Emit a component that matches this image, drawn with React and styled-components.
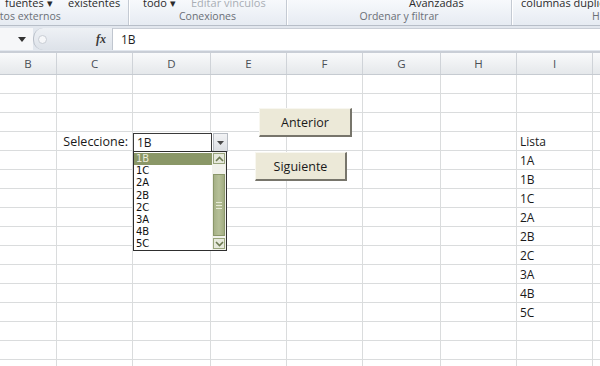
import React from 'react';
import styled, { createGlobalStyle } from 'styled-components';

const GlobalStyle = createGlobalStyle`
  html, body {
    margin: 0;
    padding: 0;
    background: #ffffff;
  }
  body {
    width: 600px;
    height: 366px;
    overflow: hidden;
    font-family: 'Open Sans', 'Liberation Sans', sans-serif;
  }
`;

const COLS = [57, 76, 78, 76, 76, 78, 76, 76, 30];
const LETTERS = ['B', 'C', 'D', 'E', 'F', 'G', 'H', 'I', ''];
const ROW_COUNT = 16;

// contenido de las celdas: fila -> { columna: texto }
const CELLS = {
  3: { 1: 'Seleccione:', 7: 'Lista' },
  4: { 7: '1A' },
  5: { 7: '1B' },
  6: { 7: '1C' },
  7: { 7: '2A' },
  8: { 7: '2B' },
  9: { 7: '2C' },
  10: { 7: '3A' },
  11: { 7: '4B' },
  12: { 7: '5C' },
};

const OPTIONS = ['1B', '1C', '2A', '2B', '2C', '3A', '4B', '5C'];

const App = () => {
  return (
    <Page>
      <GlobalStyle />
      <Ribbon>
        <Group $w={128}>
          <GroupTop>
            <TopText $left={5}>fuentes ▾</TopText>
            <TopText $left={68}>existentes</TopText>
          </GroupTop>
          <GroupLabel $align="left" $shift={-6}>atos externos</GroupLabel>
        </Group>
        <Group $w={157}>
          <GroupTop>
            <TopText $left={14}>todo ▾</TopText>
            <TopText $left={62} $faded>Editar vínculos</TopText>
          </GroupTop>
          <GroupLabel>Conexiones</GroupLabel>
        </Group>
        <Group $w={224}>
          <GroupTop>
            <TopText $left={122}>Avanzadas</TopText>
          </GroupTop>
          <GroupLabel>Ordenar y filtrar</GroupLabel>
        </Group>
        <Group $w={91} $last>
          <GroupTop>
            <TopText $left={9}>columnas  duplicados</TopText>
          </GroupTop>
          <GroupLabel $align="left" $shift={80}>H</GroupLabel>
        </Group>
      </Ribbon>

      <FormulaBar>
        <NameBox>
          <svg width="8" height="5" viewBox="0 0 8 5">
            <path d="M0 0 L8 0 L4 5 Z" fill="#333" />
          </svg>
        </NameBox>
        <FxArea>
          <Grip />
          <Fx>fx</Fx>
        </FxArea>
        <FormulaInput>1B</FormulaInput>
      </FormulaBar>

      <Sheet>
        <HeaderRow>
          {COLS.map((w, i) => (
            <HeaderCell key={i} $w={w}>
              {LETTERS[i]}
            </HeaderCell>
          ))}
        </HeaderRow>
        {Array.from({ length: ROW_COUNT }).map((_, r) => (
          <Row key={r}>
            {COLS.map((w, c) => {
              const text = CELLS[r] && CELLS[r][c];
              return (
                <Cell key={c} $w={w} $right={c === 1}>
                  {text}
                </Cell>
              );
            })}
          </Row>
        ))}

        <Combo>
          <ComboInput>1B</ComboInput>
          <ComboButton>
            <svg width="7" height="4" viewBox="0 0 7 4">
              <path d="M0 0 L7 0 L3.5 4 Z" fill="#4a4a4a" />
            </svg>
          </ComboButton>
        </Combo>
        <DropList>
          <Options>
            {OPTIONS.map((o, i) => (
              <OptionRow key={o} $active={i === 0}>
                {o}
              </OptionRow>
            ))}
          </Options>
          <ScrollBar>
            <ScrollArrow>
              <svg width="9" height="6" viewBox="0 0 9 6">
                <path d="M1 5 L4.5 1.5 L8 5" stroke="#6d7a52" strokeWidth="1.6" fill="none" />
              </svg>
            </ScrollArrow>
            <Track>
              <Thumb>
                <GripLine />
                <GripLine />
                <GripLine />
              </Thumb>
            </Track>
            <ScrollArrow>
              <svg width="9" height="6" viewBox="0 0 9 6">
                <path d="M1 1 L4.5 4.5 L8 1" stroke="#6d7a52" strokeWidth="1.6" fill="none" />
              </svg>
            </ScrollArrow>
          </ScrollBar>
        </DropList>

        <FormButton $x={259} $y={55} $w={93}>
          Anterior
        </FormButton>
        <FormButton $x={255} $y={99} $w={92}>
          Siguiente
        </FormButton>
      </Sheet>
    </Page>
  );
};

const Page = styled.div`
  width: 600px;
  height: 366px;
  overflow: hidden;
  display: flex;
  flex-direction: column;
`;

const Ribbon = styled.div`
  height: 25px;
  display: flex;
  background: linear-gradient(#f7f9fc, #e6ebf2);
  border-bottom: 1px solid #b7bec8;
  overflow: hidden;
`;

const Group = styled.div`
  width: ${({ $w }) => $w}px;
  flex: ${({ $last }) => ($last ? '1' : 'none')};
  display: flex;
  flex-direction: column;
  border-right: ${({ $last }) => ($last ? '0' : '1px solid #c4cad3')};
  box-shadow: ${({ $last }) => ($last ? 'none' : '1px 0 0 #ffffff')};
`;

const GroupTop = styled.div`
  position: relative;
  height: 9px;
  overflow: hidden;
`;

const TopText = styled.span`
  position: absolute;
  left: ${({ $left }) => $left}px;
  bottom: 0;
  font-size: 11px;
  line-height: 13px;
  color: ${({ $faded }) => ($faded ? '#a9aeb5' : '#2b2b2b')};
  white-space: nowrap;
`;

const GroupLabel = styled.div`
  height: 15px;
  font-size: 10.5px;
  line-height: 15px;
  color: #6a6f76;
  text-align: ${({ $align }) => $align || 'center'};
  margin-left: ${({ $shift }) => $shift || 0}px;
  white-space: nowrap;
`;

const FormulaBar = styled.div`
  height: 22px;
  display: flex;
  align-items: stretch;
  background: #e2e7ee;
  padding: 2px 0 1px;
  border-bottom: 2px solid #c9ced6;
`;

const NameBox = styled.div`
  width: 33px;
  display: flex;
  align-items: center;
  justify-content: flex-end;
  padding-right: 7px;
  box-sizing: border-box;
  background: #f6f7f9;
`;

const FxArea = styled.div`
  width: 80px;
  display: flex;
  align-items: center;
  justify-content: space-between;
  padding: 0 6px 0 4px;
  box-sizing: border-box;
  background: linear-gradient(#eef1f5, #dde2e9);
  border-left: 1px solid #b9bfc8;
  border-radius: 10px 0 0 10px;
  border-right: 1px solid #c0c6cf;
`;

const Grip = styled.div`
  width: 7px;
  height: 7px;
  border-radius: 50%;
  background: #f6f7f9;
  border: 1px solid #c8cdd4;
`;

const Fx = styled.span`
  font-family: 'Liberation Serif', serif;
  font-style: italic;
  font-weight: bold;
  font-size: 12px;
  color: #3a3a3a;
`;

const FormulaInput = styled.div`
  flex: 1;
  background: #ffffff;
  font-size: 12px;
  line-height: 21px;
  padding-left: 8px;
  color: #1e1e1e;
  border-top: 1px solid #c9ced6;
`;

const Sheet = styled.div`
  position: relative;
  flex: 1;
  overflow: hidden;
`;

const HeaderRow = styled.div`
  display: flex;
  height: 21px;
  background: linear-gradient(#f9fafb, #e5e8eb);
  border-bottom: 1px solid #c6cbd1;
`;

const HeaderCell = styled.div`
  width: ${({ $w }) => $w}px;
  flex: none;
  box-sizing: border-box;
  border-right: 1px solid #cfd3d8;
  font-size: 11.5px;
  line-height: 21px;
  text-align: center;
  color: #4a4f55;
`;

const Row = styled.div`
  display: flex;
  height: 19px;
`;

const Cell = styled.div`
  width: ${({ $w }) => $w}px;
  flex: none;
  box-sizing: border-box;
  border-right: 1px solid #dadcdd;
  border-bottom: 1px solid #dadcdd;
  font-size: ${({ $right }) => ($right ? '12.5px' : '12px')};
  line-height: 19px;
  padding: 0 4px 0 3px;
  color: #1a1a1a;
  text-align: ${({ $right }) => ($right ? 'right' : 'left')};
  white-space: nowrap;
`;

const Combo = styled.div`
  position: absolute;
  left: 133px;
  top: 80px;
  display: flex;
  height: 19px;
`;

const ComboInput = styled.div`
  width: 79px;
  box-sizing: border-box;
  background: #ffffff;
  border: 1px solid #3a3a3a;
  font-size: 12px;
  line-height: 17px;
  padding-left: 3px;
  color: #1a1a1a;
`;

const ComboButton = styled.div`
  width: 15px;
  margin-left: 1px;
  box-sizing: border-box;
  display: flex;
  align-items: center;
  justify-content: center;
  background: linear-gradient(#f2f3f5, #dcdfe3);
  border: 1px solid #b7bcc3;
`;

const DropList = styled.div`
  position: absolute;
  left: 133px;
  top: 98px;
  width: 94px;
  height: 100px;
  box-sizing: border-box;
  background: #ffffff;
  border: 1px solid #2e2e2e;
  display: flex;
`;

const Options = styled.div`
  flex: 1;
  padding-top: 1px;
`;

const OptionRow = styled.div`
  height: 12.2px;
  font-family: 'DejaVu Sans', 'Liberation Sans', sans-serif;
  font-size: 10px;
  line-height: 12px;
  padding-left: 2px;
  color: ${({ $active }) => ($active ? '#e9ead8' : '#111111')};
  background: ${({ $active }) => ($active ? '#8a9767' : 'transparent')};
`;

const ScrollBar = styled.div`
  width: 14px;
  display: flex;
  flex-direction: column;
  padding: 1px 0;
  box-sizing: border-box;
  background: #f1f2ec;
`;

const ScrollArrow = styled.div`
  height: 11px;
  margin: 0 1px;
  box-sizing: border-box;
  display: flex;
  align-items: center;
  justify-content: center;
  background: #e6e9dc;
  border: 1px solid #99a57c;
`;

const Track = styled.div`
  flex: 1;
  display: flex;
  flex-direction: column;
  padding: 10px 1px 2px;
`;

const Thumb = styled.div`
  flex: 1;
  box-sizing: border-box;
  background: linear-gradient(90deg, #a6b187, #b6c098, #a2ad82);
  border: 1px solid #8b976a;
  display: flex;
  flex-direction: column;
  align-items: center;
  justify-content: center;
  gap: 2px;
`;

const GripLine = styled.div`
  width: 6px;
  height: 1px;
  background: #e6ead6;
`;

const FormButton = styled.div`
  position: absolute;
  left: ${({ $x }) => $x}px;
  top: ${({ $y }) => $y}px;
  width: ${({ $w }) => $w}px;
  height: 29px;
  box-sizing: border-box;
  background: #ece9d8;
  border-top: 1px solid #f8f7f0;
  border-left: 1px solid #f8f7f0;
  border-right: 2px solid #77756b;
  border-bottom: 2px solid #77756b;
  display: flex;
  align-items: center;
  justify-content: center;
  font-size: 12.5px;
  color: #1a1a1a;
`;

export default App;
